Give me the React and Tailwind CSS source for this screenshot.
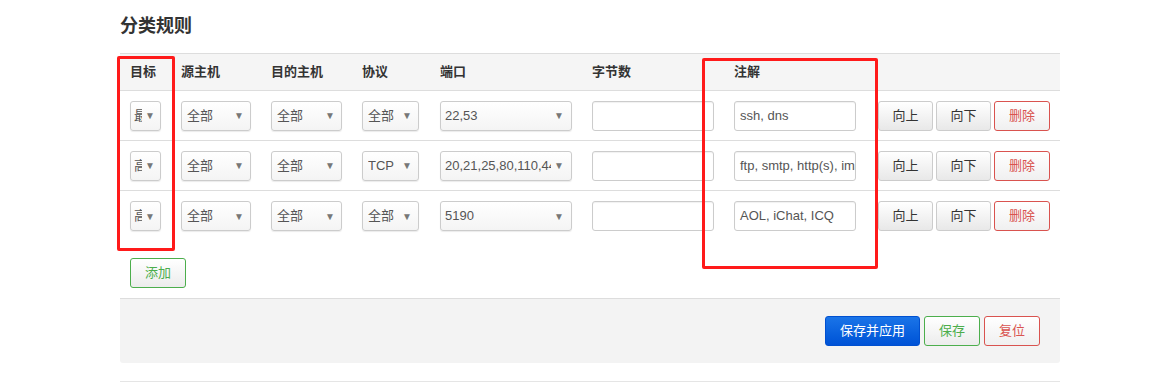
import React from 'react';

const FONT = { fontFamily: '"Liberation Sans", "Noto Sans CJK SC", sans-serif' };

const rules = [
  { target: '最高', src: '全部', dest: '全部', proto: '全部', ports: '22,53', bytes: '', comment: 'ssh, dns' },
  { target: '高', src: '全部', dest: '全部', proto: 'TCP', ports: '20,21,25,80,110,443,993,995', bytes: '', comment: 'ftp, smtp, http(s), imap' },
  { target: '高', src: '全部', dest: '全部', proto: '全部', ports: '5190', bytes: '', comment: 'AOL, iChat, ICQ' },
];

const cols = 'grid grid-cols-[51px_90px_91px_78px_152px_142px_142px_1fr]';

function Select({ value, width }) {
  return (
    <div
      className={`${width} h-[30px] flex items-center border border-[#ccc] rounded-[3px] bg-gradient-to-b from-white to-[#f4f4f4] shadow-[0_1px_1px_rgba(0,0,0,0.08)] overflow-hidden`}
    >
      <span className="flex-1 min-w-0 overflow-hidden whitespace-nowrap text-[13px] text-[#555]">{value}</span>
      <span className="text-[10px] text-[#777] pl-[3px]">▼</span>
    </div>
  );
}

function Input({ value }) {
  return (
    <div className="w-[122px] h-[30px] flex items-center border border-[#ccc] rounded-[3px] bg-white shadow-[inset_0_1px_1px_rgba(0,0,0,0.06)] px-[5px] overflow-hidden">
      <span className="whitespace-nowrap text-[13px] text-[#555]">{value}</span>
    </div>
  );
}

function Btn({ children, tone = 'plain', className = '' }) {
  const tones = {
    plain: 'border-[#ccc] text-[#333] from-white to-[#e8e8e8]',
    red: 'border-[#d9534f] text-[#d9534f] from-white to-[#f0f0f0]',
    green: 'border-[#4cae4c] text-[#4cae4c] from-white to-[#ececec]',
    blue: 'border-[#0050d0] text-white from-[#1a74e8] to-[#0052d6]',
  };
  return (
    <button
      className={`h-[30px] border rounded-[3px] bg-gradient-to-b text-[13px] flex items-center justify-center ${tones[tone]} ${className}`}
    >
      {children}
    </button>
  );
}

export default function App() {
  return (
    <div className="relative w-[1176px] h-[390px] bg-white overflow-hidden" style={FONT}>
      <div className="ml-[120px] w-[940px] pt-[13px]">
        <h3 className="text-[18px] font-bold text-[#333] leading-[26px]">分类规则</h3>

        <div className="mt-[14px] border-t border-[#ddd]">
          <div className={`${cols} bg-[#f5f5f5] border-b border-[#ddd] h-[37px] items-center text-[13px] font-bold text-[#333]`}>
            <div className="pl-[10px]">目标</div>
            <div className="pl-[10px]">源主机</div>
            <div className="pl-[10px]">目的主机</div>
            <div className="pl-[10px]">协议</div>
            <div className="pl-[10px]">端口</div>
            <div className="pl-[10px]">字节数</div>
            <div className="pl-[10px]">注解</div>
            <div />
          </div>

          {rules.map((r, i) => (
            <div
              key={i}
              className={`${cols} h-[50px] items-center ${i < rules.length - 1 ? 'border-b border-[#ddd]' : ''}`}
            >
              <div className="pl-[10px]">
                <Select value={r.target} width="w-[31px] pl-[3px] pr-[5px]" />
              </div>
              <div className="pl-[10px]">
                <Select value={r.src} width="w-[70px] pl-[5px] pr-[6px]" />
              </div>
              <div className="pl-[10px]">
                <Select value={r.dest} width="w-[71px] pl-[5px] pr-[6px]" />
              </div>
              <div className="pl-[10px]">
                <Select value={r.proto} width="w-[57px] pl-[5px] pr-[6px]" />
              </div>
              <div className="pl-[10px]">
                <Select value={r.ports} width="w-[132px] pl-[4px] pr-[7px]" />
              </div>
              <div className="pl-[10px]">
                <Input value={r.bytes} />
              </div>
              <div className="pl-[10px]">
                <Input value={r.comment} />
              </div>
              <div className="pl-[12px] flex gap-[3px]">
                <Btn className="w-[55px]">向上</Btn>
                <Btn className="w-[55px]">向下</Btn>
                <Btn tone="red" className="w-[56px]">删除</Btn>
              </div>
            </div>
          ))}
        </div>

        <div className="pl-[10px] pt-[17px]">
          <Btn tone="green" className="w-[56px]">添加</Btn>
        </div>

        <div className="mt-[10px] h-[65px] bg-[#f3f3f3] border-t border-[#ddd] rounded-b-[3px] flex items-center justify-end gap-[4px] pr-[20px]">
          <Btn tone="blue" className="w-[95px]">保存并应用</Btn>
          <Btn tone="green" className="w-[56px]">保存</Btn>
          <Btn tone="red" className="w-[56px]">复位</Btn>
        </div>

        <div className="mt-[18px] border-t border-[#e5e5e5]" />
      </div>

      {/* red annotation boxes */}
      <div className="absolute left-[117px] top-[56px] w-[58px] h-[195px] border-[3px] border-[#ff1a1a] rounded-[2px]" />
      <div className="absolute left-[702px] top-[58px] w-[176px] h-[211px] border-[3px] border-[#ff1a1a] rounded-[2px]" />
    </div>
  );
}
